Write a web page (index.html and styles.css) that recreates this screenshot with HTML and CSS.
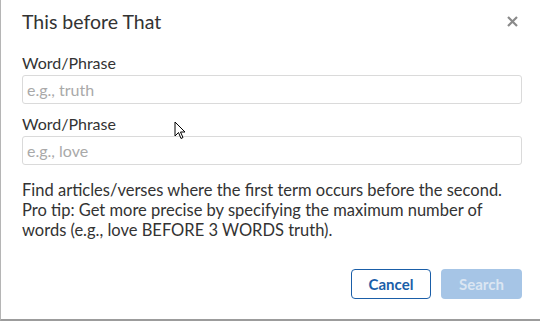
FILE: index.html
```html
<!DOCTYPE html>
<html lang="en">
<head>
    <meta charset="UTF-8">
    <title>This before That</title>
    <link rel="stylesheet" href="styles.css">
</head>
<body>
    <div class="modal">
        <div class="modal-header">
            <h3>This before That</h3>
            <button class="close" aria-label="Close">
                <svg width="11" height="11" viewBox="0 0 11 11"><path d="M1 1L10 10M10 1L1 10" stroke="#8a8a8a" stroke-width="2.2"/></svg>
            </button>
        </div>
        <div class="modal-body">
            <div class="field">
                <label for="term1">Word/Phrase</label>
                <input id="term1" type="text" placeholder="e.g., truth">
            </div>
            <div class="field">
                <label for="term2">Word/Phrase</label>
                <input id="term2" type="text" placeholder="e.g., love">
            </div>
            <p class="help">
                <span>Find articles/verses where the first term occurs before the second.</span>
                <span>Pro tip: Get more precise by specifying the maximum number of words (e.g., love BEFORE 3 WORDS truth).</span>
            </p>
        </div>
        <div class="modal-footer">
            <button class="btn btn-outline">Cancel</button>
            <button class="btn btn-primary" disabled>Search</button>
        </div>
    </div>
    <!-- mouse pointer from the capture -->
    <svg class="pointer" width="13" height="20" viewBox="0 0 13 20"><path d="M1 1L1 15L4.5 11.5L7 17.5L9 16.5L6.5 11L11 11Z" fill="#fff" stroke="#000" stroke-width="1"/></svg>
</body>
</html>
```

FILE: styles.css
```css
body {
    margin: 0;
    font-family: Lato, "Liberation Sans", sans-serif;
    color: #333;
    background: #fff;
    overflow: hidden;
}
.modal {
    width: 544px;
    height: 321px;
    box-sizing: border-box;
    border-left: 1px solid #b5b5b5;
    border-bottom: 2px solid #9c9c9c;
    background: #fff;
    display: flex;
    flex-direction: column;
}
.modal-header {
    display: flex;
    align-items: center;
    justify-content: space-between;
    padding: 4px 26px 0 21px;
    height: 35px;
}
.modal-header h3 {
    margin: 0;
    font-size: 19.5px;
    font-weight: 400;
    color: #333;
}
.close {
    border: 0;
    background: none;
    padding: 0;
    display: flex;
}
.modal-body {
    padding: 14px 22px 0 21px;
}
.field {
    display: flex;
    flex-direction: column;
    margin-bottom: 10px;
}
.field label {
    font-size: 16px;
    line-height: 20px;
    margin-bottom: 2px;
}
.field input {
    width: 500px;
    height: 29px;
    box-sizing: border-box;
    border: 1px solid #dadada;
    border-radius: 3px;
    padding: 0 4px;
    font-family: inherit;
    font-size: 16px;
    color: #333;
}
.field input::placeholder {
    color: #a9a9a9;
}
.help {
    margin: 15px 0 0;
    font-size: 16.5px;
    line-height: 20px;
    width: 500px;
}
.help span {
    display: block;
}
.modal-footer {
    display: flex;
    justify-content: flex-end;
    gap: 10px;
    padding: 0 22px 0 0;
    margin-top: 29px;
}
.btn {
    height: 30px;
    border-radius: 4px;
    font-family: inherit;
    font-size: 15px;
    font-weight: 700;
    padding: 0;
}
.btn-outline {
    width: 80px;
    border: 1px solid #1a5ea8;
    background: #fff;
    color: #1a5ea8;
}
.btn-primary {
    width: 81px;
    border: 0;
    background: #a6c5e6;
    color: #dbe6f2;
}
.pointer {
    position: absolute;
    left: 174px;
    top: 121px;
}
```
